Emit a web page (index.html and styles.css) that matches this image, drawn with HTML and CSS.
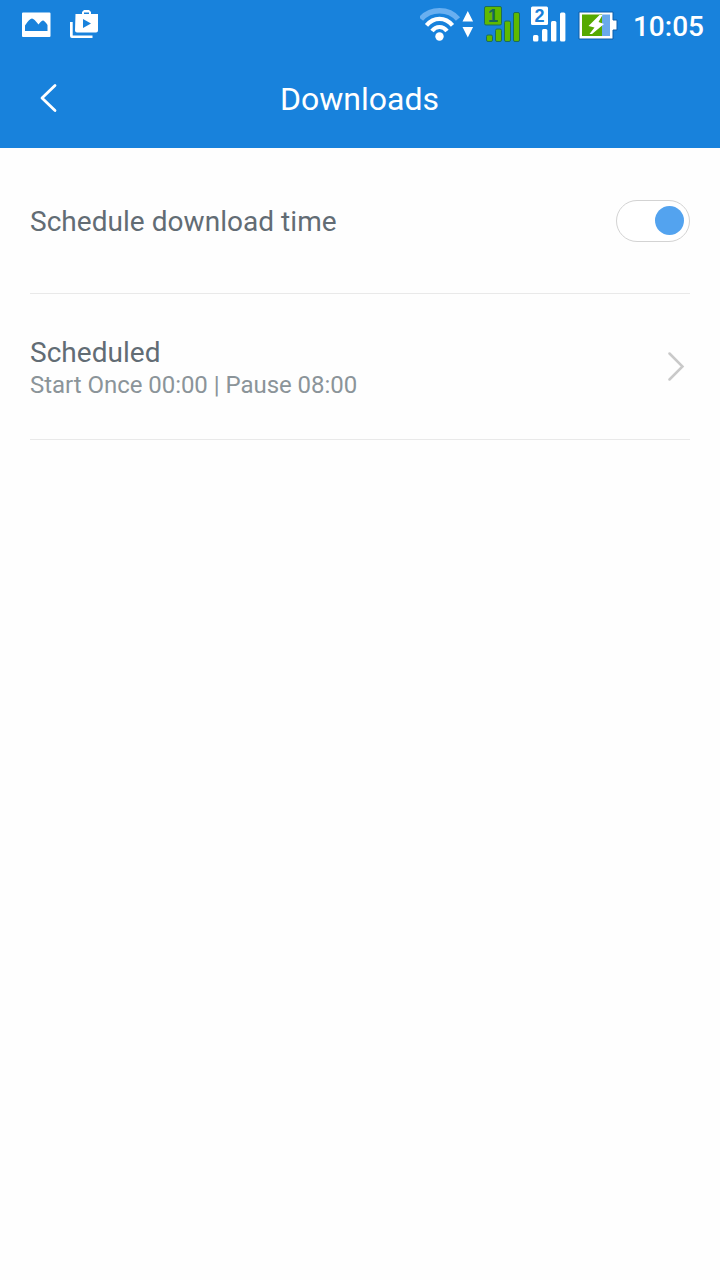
FILE: index.html
```html
<!DOCTYPE html>
<html lang="en">

<head>
    <meta charset="UTF-8">
    <meta name="viewport" content="width=device-width, initial-scale=1.0">
    <title>Downloads</title>
    <link rel="stylesheet" href="styles.css">
</head>

<body>
    <div class="status">
        <div class="notices">
            <!-- picture -->
            <svg width="30" height="50" viewBox="0 0 30 50">
                <path fill="#fff" fill-rule="evenodd" d="M2 12.500h26.500q1 0 1 1V36q0 1-1 1H2q-1 0-1-1V13.500q0-1 1-1zM4 31h22.500V25q-3-4.500-4.500-4.500-1.500 0-4.500 4-4.500-6-6.500-6Q8.500 18.500 4 25.500z" />
            </svg>
            <!-- store -->
            <svg width="30" height="50" viewBox="0 0 30 50">
                <path fill="#fff" d="M0 22h2.700v13.500H22.500V38H2q-2 0-2-2z" />
                <path fill="#fff" fill-rule="evenodd" d="M5.500 14H12v-2l2-2h5l2 2v2h7v16.500q0 2-2 2h-19q-2 0-2-2zM14 14h5v-1.500h-5zM13 19v9l8-4.500z" />
            </svg>
        </div>
        <div class="system">
            <svg class="wifi" width="56" height="50" viewBox="0 0 56 50">
                <g fill="none" stroke="#fff" stroke-width="4.200">
                    <path stroke="#69aff0" stroke-width="5.500" d="M1 19Q8 10.700 19.500 10.700T38 19" />
                    <path d="M6.500 25.300Q12 18.800 19.500 18.800T32.500 25.300" />
                    <path d="M12 31Q15 27 19.500 27T27 31" />
                </g>
                <circle cx="19.500" cy="36.500" r="4.200" fill="#fff" />
                <path fill="#fff" d="M42.500 21.500l5.300-10.500 5.300 10.500zM42.500 27h10.600l-5.300 10.500z" />
            </svg>
            <svg class="sim-one" width="38" height="50" viewBox="0 0 38 50">
                <g fill="#5fb900" stroke="#1c6c5c" stroke-width="1">
                    <rect x="0.500" y="6.500" width="17" height="18.500" rx="1.500" />
                    <rect x="2.500" y="35" width="6" height="6.500" rx="1.500" />
                    <rect x="11.500" y="29" width="6" height="12.500" rx="1.500" />
                    <rect x="20.500" y="21" width="6" height="20.500" rx="1.500" />
                    <rect x="29.500" y="12.500" width="6" height="29" rx="1.500" />
                </g>
                <text class="sim-num" x="9" y="22" fill="#17665a">1</text>
            </svg>
            <svg class="sim-two" width="38" height="50" viewBox="0 0 38 50">
                <g fill="#fff">
                    <rect x="1" y="6.500" width="17" height="18.500" rx="1.500" />
                    <rect x="3" y="35" width="5.400" height="6.500" rx="1.500" />
                    <rect x="12" y="29" width="5.400" height="12.500" rx="1.500" />
                    <rect x="21" y="21" width="5.400" height="20.500" rx="1.500" />
                    <rect x="30" y="12.500" width="5.400" height="29" rx="1.500" />
                </g>
                <text class="sim-num" x="9.500" y="21.500" fill="#1a80d8">2</text>
            </svg>
            <svg class="battery" width="40" height="50" viewBox="0 0 40 50">
                <path fill="#fff" stroke="#0d5da8" stroke-width="1" d="M1 12h34v8h4v10h-4v9H1z" />
                <path fill="#56a900" d="M4 14.500h20v21.500H4z" />
                <path fill="#69a9ec" d="M24 14.500h8v21.500h-8z" />
                <path fill="#fff" d="M21.500 15L10.500 26l6 1.500-5 6.500h2.500L26 24l-5.500-2 4-7z" />
            </svg>
            <span class="clock">10:05</span>
        </div>
    </div>

    <div class="header">
        <a href="#" class="back">
            <svg width="20" height="32" viewBox="0 0 20 32">
                <path d="M16 3.500L3 16l13 12.500" />
            </svg>
        </a>
        <h1>Downloads</h1>
    </div>

    <div class="list">
        <label class="item">
            <span class="name">Schedule download time</span>
            <input type="checkbox" class="switch" checked>
        </label>
        <div class="item">
            <div class="text">
                <h2 class="name">Scheduled</h2>
                <p>Start Once 00:00 | Pause 08:00</p>
            </div>
            <svg class="arrow" width="18" height="30" viewBox="0 0 18 30">
                <path d="M2.500 1.500L15.500 14.500 2.500 27.500" />
            </svg>
        </div>
    </div>
</body>

</html>
```
FILE: styles.css
```css
* {
    padding: 0;
    margin: 0;
    box-sizing: border-box;
}

body {
    min-height: 100vh;
    background-color: #fefefe;
    font-family: Roboto, "Liberation Sans", sans-serif;
}

svg {
    display: block;
    flex: none;
}

/* status bar */
.status {
    display: flex;
    justify-content: space-between;
    height: 50px;
    padding: 0 16px 0 21px;
    background-color: #1882dc;
    color: #fff;
}

.notices {
    display: flex;
    gap: 19px;
}

.system {
    display: flex;
}

.wifi {
    margin-right: 8px;
}

.sim-one {
    margin-right: 8px;
}

.sim-two {
    margin-right: 10px;
}

.sim-num {
    font: bold 18px "Liberation Sans", sans-serif;
    text-anchor: middle;
}

.battery {
    margin-right: 15px;
}

.clock {
    font-size: 28px;
    font-weight: 500;
    line-height: 53px;
}

/* title bar */
.header {
    display: flex;
    align-items: center;
    height: 98px;
    padding: 0 38px 0 39px;
    background-color: #1882dc;
    color: #fff;
}

.back {
    width: 20px;
    padding-bottom: 2px;
}

.back path {
    fill: none;
    stroke: #fff;
    stroke-width: 2.8;
    stroke-linecap: round;
    stroke-linejoin: round;
}

.header h1 {
    flex: 1;
    margin-right: 22px;
    font-size: 32px;
    font-weight: 400;
    line-height: 40px;
    text-align: center;
}

/* settings */
.list {
    padding: 0 30px;
}

.item {
    display: flex;
    align-items: center;
    justify-content: space-between;
    height: 146px;
    border-bottom: 1px solid #e9e9e9;
}

.name {
    color: #626c74;
    font-size: 28px;
    font-weight: 400;
    letter-spacing: 0.04px;
    line-height: 34px;
}

.item > .name {
    padding-top: 2px;
}

.text {
    padding-top: 2px;
}

.item p {
    color: #8b9499;
    font-size: 24px;
    letter-spacing: -0.04px;
    line-height: 30px;
}

.switch {
    appearance: none;
    display: flex;
    align-items: center;
    justify-content: flex-end;
    width: 74px;
    height: 42px;
    padding-right: 5px;
    border: 1px solid #d3d3d3;
    border-radius: 21px;
    background-color: #fff;
}

.switch::before {
    content: '';
    width: 29px;
    height: 29px;
    border-radius: 50%;
    background-color: #53a3ef;
}

.switch:not(:checked) {
    justify-content: flex-start;
    padding: 0 0 0 5px;
}

.arrow {
    margin-right: 5px;
}

.arrow path {
    fill: none;
    stroke: #c9c9c9;
    stroke-width: 2.5;
    stroke-linecap: round;
}
```
